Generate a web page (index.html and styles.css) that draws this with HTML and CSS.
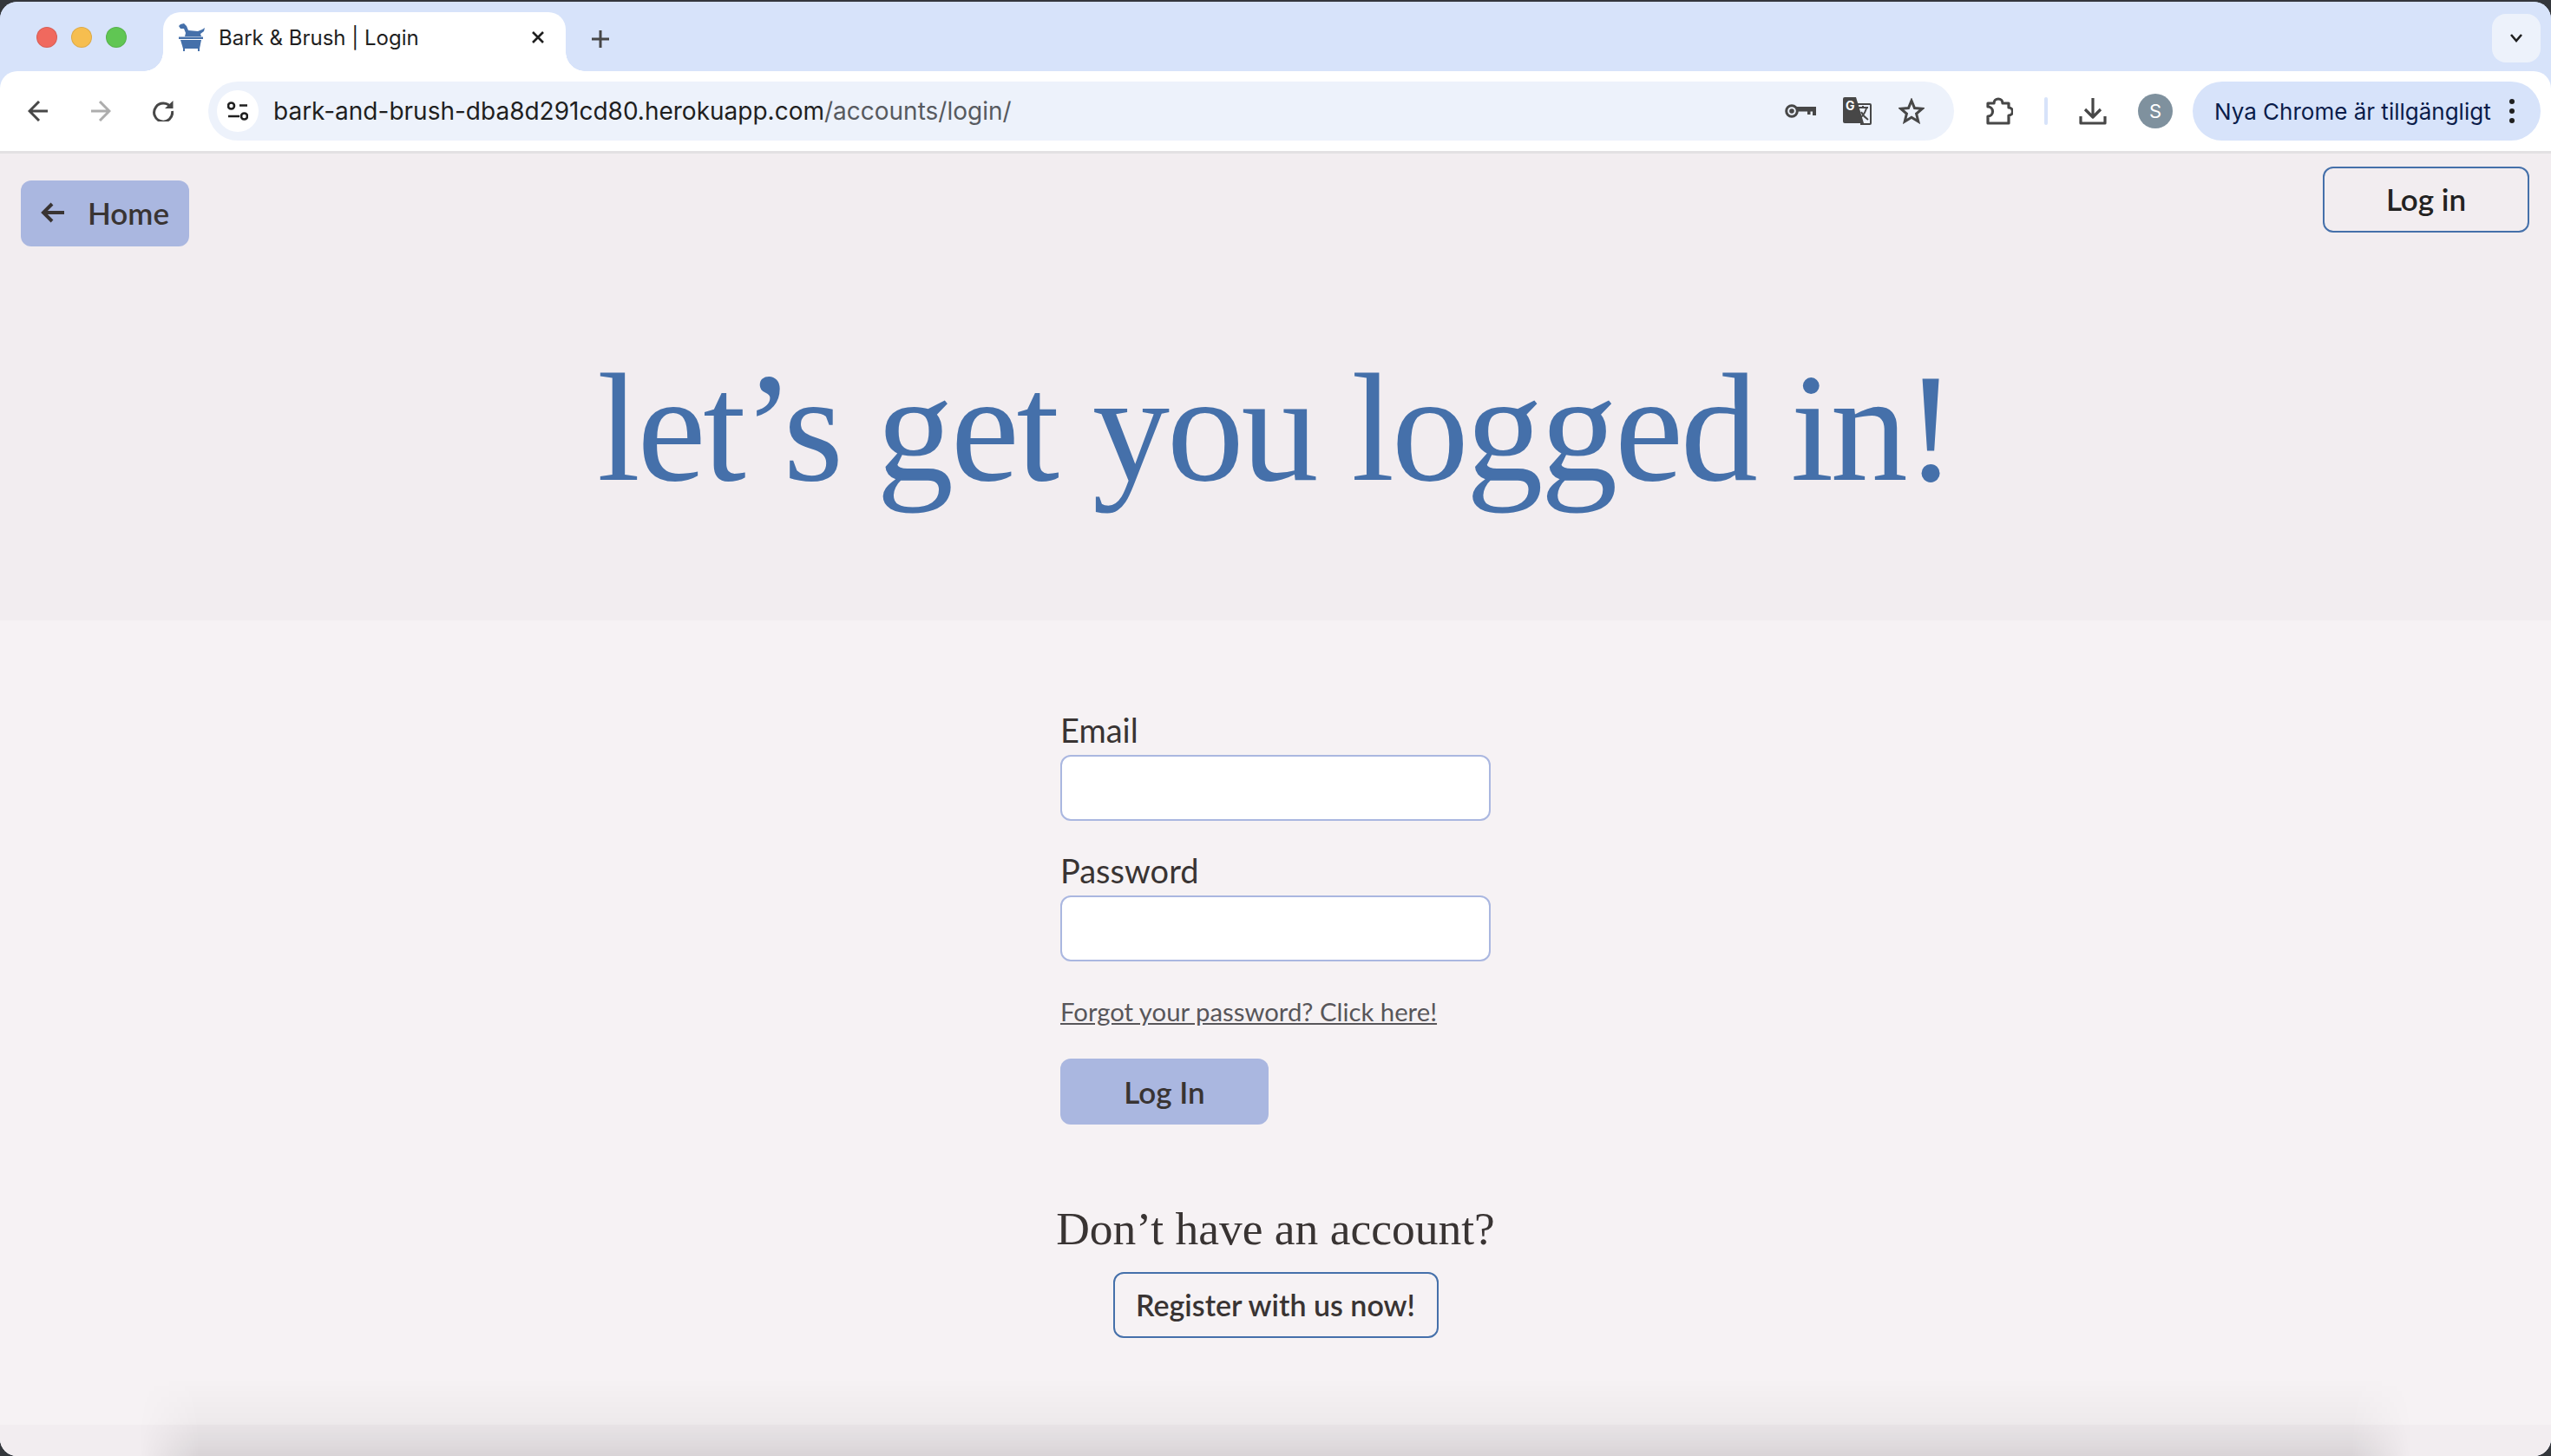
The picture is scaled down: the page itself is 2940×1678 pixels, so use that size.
FILE: index.html
```html
<!DOCTYPE html>
<html lang="en">
<head>
  <meta charset="UTF-8">
  <meta name="viewport" content="width=device-width, initial-scale=1.0">
  <title>Bark &amp; Brush | Login</title>
  <link rel="stylesheet" href="styles.css">
</head>
<body>
  <div class="window">

    <!-- Tab strip -->
    <div class="tabstrip">
      <div class="traffic">
        <span class="dot dot-red"></span>
        <span class="dot dot-yellow"></span>
        <span class="dot dot-green"></span>
      </div>
      <div class="tab">
        <svg class="favicon" viewBox="0 0 32 32">
          <path d="M4 1L8 0L11 3L13 8L24 9L29 7L32 5L31 9L27 12L28 15H9L10 11L8 6H4L2 3Z"/>
          <rect x="2" y="15.500" width="28" height="2.500"/>
          <path d="M4 19H28L26 29H7Z"/>
          <rect x="7" y="29" width="2" height="3"/>
          <rect x="24" y="29" width="2" height="3"/>
        </svg>
        <span class="tab-title">Bark &amp; Brush | Login</span>
        <svg class="tab-close" viewBox="0 0 16 16"><path d="M2 2L14 14M14 2L2 14"/></svg>
      </div>
      <svg class="new-tab" viewBox="0 0 24 24"><path d="M12 2V22M2 12H22"/></svg>
      <div class="tab-search">
        <svg viewBox="0 0 16 10"><path d="M2 1L8 8L14 1"/></svg>
      </div>
    </div>

    <!-- Toolbar -->
    <div class="toolbar">
      <svg class="tool-icon" viewBox="0 0 24 24"><path d="M23 12H3M13 1L2 12L13 23"/></svg>
      <svg class="tool-icon tool-off" viewBox="0 0 24 24"><path d="M1 12H21M11 1L22 12L11 23"/></svg>
      <svg class="tool-icon" viewBox="0 0 24 24"><path d="M21 8A10.500 10.500 0 1 0 22.500 12"/><path class="solid" d="M14 9H23.500V0Z"/></svg>

      <div class="omnibox">
        <span class="site-info">
          <svg viewBox="0 0 24 24">
            <circle cx="4.500" cy="6" r="3.500"/>
            <path d="M14 5.500H23M1 18H14"/>
            <circle cx="19.500" cy="18" r="3.500"/>
          </svg>
        </span>
        <span class="url"><span class="url-host">bark-and-brush-dba8d291cd80.herokuapp.com</span>/accounts/login/</span>
        <div class="omni-actions">
          <svg class="key-icon" viewBox="0 0 36 16">
            <circle cx="8" cy="8" r="6.300"/>
            <circle class="solid" cx="8" cy="8" r="2.800"/>
            <path class="solid" d="M14 3H36V13H32V8.500H29.500V12H26V8.500H14Z"/>
          </svg>
          <svg class="translate-icon" viewBox="0 0 33 32">
            <path class="solid" d="M2 0H15L24 30H2A2 2 0 0 1 0 28V2A2 2 0 0 1 2 0Z"/>
            <path class="outline" d="M17 8H31A1 1 0 0 1 32 9V30A1 1 0 0 1 31 31H20"/>
            <path class="outline" d="M18 12H29M23 10V13M27 13C25 19 22 23 18 25M21 17C23 21 26 24 29 26"/>
            <text class="translate-g" x="3" y="15">G</text>
          </svg>
          <svg class="star-icon" viewBox="0 0 30 30"><path d="M15 3L18.500 11.500L27.500 12.200L20.600 18L22.800 27L15 22.200L7.200 27L9.400 18L2.500 12.200L11.500 11.500Z"/></svg>
        </div>
      </div>

      <svg class="action-icon" viewBox="0 0 32 32"><path d="M3 7H10A5 5 0 0 1 20 7H27V12A4.500 4.500 0 0 1 27 21V30H3V22A5.500 5.500 0 0 0 3 11Z"/></svg>
      <span class="divider"></span>
      <svg class="action-icon" viewBox="0 0 32 32"><path d="M16 1V22M7 14L16 23L25 14M2 22V30H30V22"/></svg>
      <span class="avatar">S</span>
      <div class="update-pill">
        <span>Nya Chrome är tillgängligt</span>
        <svg class="menu-dots" viewBox="0 0 8 30"><circle cx="4" cy="4" r="3"/><circle cx="4" cy="15" r="3"/><circle cx="4" cy="26" r="3"/></svg>
      </div>
    </div>

    <!-- Page -->
    <div class="page">
      <header class="hero">
        <nav class="hero-nav">
          <a class="btn btn-home" href="#">
            <svg viewBox="0 0 28 24"><path d="M27 12H3M13 2L3 12L13 22"/></svg>
            Home
          </a>
          <a class="btn btn-login" href="#">Log in</a>
        </nav>
        <h1>let’s get you logged in!</h1>
      </header>

      <main class="content">
        <form class="login-form">
          <label for="email">Email</label>
          <input id="email" type="email">

          <label for="password">Password</label>
          <input id="password" type="password">

          <a class="forgot" href="#">Forgot your password? Click here!</a>
          <button class="btn btn-submit" type="button">Log In</button>
        </form>

        <h2>Don’t have an account?</h2>
        <a class="btn btn-register" href="#">Register with us now!</a>
      </main>

      <footer class="footer"></footer>
      <div class="bottom-shade"></div>
    </div>
  </div>
</body>
</html>
```

FILE: styles.css
```css
/* Browser frame */
* {
  box-sizing: border-box;
}

body {
  margin: 0;
  height: 100vh;
  background-color: #34373c;
  font-family: "Lato", "Inter", sans-serif;
  color: #393433;
  overflow: hidden;
}

.window {
  height: calc(100vh - 2px);
  margin-top: 2px;
  border-radius: 20px;
  overflow: hidden;
  display: flex;
  flex-direction: column;
  background-color: #d7e3fa;
}

.tabstrip {
  height: 80px;
  padding: 12px 12px 0 42px;
  display: flex;
  align-items: flex-start;
  background-color: #d7e3fa;
}

.traffic {
  display: flex;
  gap: 16px;
  margin-top: 17px;
}

.dot {
  width: 24px;
  height: 24px;
  border-radius: 50%;
  border: 1px solid rgba(0, 0, 0, 0.1);
}

.dot-red { background-color: #f0695e; }
.dot-yellow { background-color: #f6be4f; }
.dot-green { background-color: #60c653; }

.tab {
  position: relative;
  z-index: 1;
  width: 464px;
  height: 68px;
  margin-left: 42px;
  padding: 0 24px 10px 16px;
  display: flex;
  align-items: center;
  background: #fff;
  border-radius: 20px 20px 0 0;
}

.tab::before,
.tab::after {
  content: "";
  position: absolute;
  bottom: 0;
  width: 22px;
  height: 22px;
}

.tab::before {
  left: -22px;
  background: radial-gradient(circle at 0 0, transparent 21.500px, #fff 22px);
}

.tab::after {
  right: -22px;
  background: radial-gradient(circle at 100% 0, transparent 21.500px, #fff 22px);
}

.favicon {
  width: 32px;
  height: 32px;
  fill: #4570aa;
  flex-shrink: 0;
}

.tab-title {
  margin-left: 16px;
  font-family: "Inter", sans-serif;
  font-size: 24px;
  color: #1f1f1f;
  white-space: nowrap;
}

.tab-close {
  width: 16px;
  height: 16px;
  margin-left: auto;
  fill: none;
  stroke: #1f1f1f;
  stroke-width: 2.600;
}

.new-tab {
  width: 24px;
  height: 24px;
  margin: 19px 0 0 28px;
  fill: none;
  stroke: #474747;
  stroke-width: 3;
}

.tab-search {
  width: 56px;
  height: 56px;
  margin: 2px 0 0 auto;
  display: flex;
  align-items: center;
  justify-content: center;
  background-color: #edf2fb;
  border-radius: 16px;
}

.tab-search svg {
  width: 16px;
  height: 10px;
  fill: none;
  stroke: #1f1f1f;
  stroke-width: 2.600;
}

/* Toolbar */
.toolbar {
  height: 95px;
  padding: 12px 12px 12px 32px;
  display: flex;
  align-items: center;
  gap: 36px;
  background: #fff;
  border-bottom: 3px solid #e3e1e3;
  border-radius: 20px 20px 0 0;
}

.tool-icon {
  width: 24px;
  height: 24px;
  margin-right: 12px;
  fill: none;
  stroke: #474747;
  stroke-width: 3;
}

.tool-icon .solid {
  fill: #474747;
  stroke: none;
}

.tool-off {
  stroke: #adadad;
}

.omnibox {
  flex: 1;
  height: 68px;
  margin-left: -8px;
  padding: 0 34px 0 10px;
  display: flex;
  align-items: center;
  background-color: #edf2fb;
  border-radius: 34px;
}

.site-info {
  width: 48px;
  height: 48px;
  display: flex;
  align-items: center;
  justify-content: center;
  background: #fff;
  border-radius: 50%;
}

.site-info svg {
  width: 24px;
  height: 24px;
  fill: none;
  stroke: #1f1f1f;
  stroke-width: 2.600;
}

.url {
  margin-left: 17px;
  font-family: "Inter", sans-serif;
  font-size: 28px;
  color: #575a5f;
  white-space: nowrap;
}

.url-host {
  color: #1f1f1f;
}

.omni-actions {
  margin-left: auto;
  display: flex;
  align-items: center;
  gap: 31px;
  fill: none;
  stroke: #474747;
  stroke-width: 3;
}

.key-icon {
  width: 36px;
  height: 16px;
}

.key-icon .solid,
.translate-icon .solid {
  fill: #474747;
  stroke: none;
}

.translate-icon {
  width: 33px;
  height: 32px;
}

.translate-icon .outline {
  stroke-width: 2;
}

.translate-g {
  font-family: "Inter", sans-serif;
  font-size: 14px;
  font-weight: 700;
  fill: #fff;
  stroke: none;
}

.star-icon {
  width: 30px;
  height: 30px;
}

.action-icon {
  width: 32px;
  height: 32px;
  fill: none;
  stroke: #474747;
  stroke-width: 3.200;
  stroke-linejoin: round;
}

.divider {
  width: 4px;
  height: 32px;
  background-color: #d7e3fa;
  border-radius: 2px;
}

.avatar {
  width: 40px;
  height: 40px;
  display: flex;
  align-items: center;
  justify-content: center;
  background-color: #7f919e;
  border-radius: 50%;
  font-family: "Inter", sans-serif;
  font-size: 22px;
  color: #fff;
}

.update-pill {
  width: 401px;
  height: 68px;
  margin-left: -13px;
  padding: 0 29px 0 25px;
  display: flex;
  align-items: center;
  justify-content: space-between;
  background-color: #d7e3fa;
  border-radius: 34px;
  font-family: "Inter", sans-serif;
  font-size: 26px;
  color: #0a1c4a;
  white-space: nowrap;
}

.menu-dots {
  width: 8px;
  height: 30px;
  fill: #1f1f1f;
}

/* Page */
.page {
  position: relative;
  flex: 1;
  display: flex;
  flex-direction: column;
  background-color: #f6f2f4;
}

.hero {
  height: 538px;
  background-color: #f2edf0;
}

.hero-nav {
  display: flex;
  justify-content: space-between;
  align-items: flex-start;
  padding: 15px 25px 0 24px;
}

.btn {
  display: flex;
  align-items: center;
  justify-content: center;
  height: 76px;
  padding-bottom: 2px;
  border-radius: 12px;
  font-family: "Lato", sans-serif;
  font-size: 35px;
  font-weight: 600;
  color: #393433;
  text-decoration: none;
}

.btn-home {
  width: 194px;
  margin-top: 16px;
  gap: 26px;
  background-color: #aab7e0;
}

.btn-home svg {
  width: 28px;
  height: 24px;
  fill: none;
  stroke: #393433;
  stroke-width: 4;
}

.btn-login {
  width: 238px;
  border: 2px solid #4570aa;
  color: #222;
}

.hero h1 {
  margin: 109px 0 0;
  font-family: "Liberation Serif", serif;
  font-size: 178px;
  font-weight: 400;
  line-height: 200px;
  letter-spacing: -3.250px;
  text-align: center;
  color: #4570aa;
}

.content {
  flex: 1;
  padding-top: 101px;
  display: flex;
  flex-direction: column;
  align-items: center;
}

.login-form {
  width: 496px;
  display: flex;
  flex-direction: column;
  align-items: flex-start;
}

.login-form label {
  font-size: 38px;
  line-height: 50px;
  margin-bottom: 4px;
}

.login-form input {
  width: 100%;
  height: 76px;
  margin-bottom: 32px;
  background: #fff;
  border: 2px solid #aab7e0;
  border-radius: 12px;
}

.forgot {
  margin-top: 6px;
  font-size: 29.300px;
  line-height: 40px;
  color: #58565a;
}

.btn-submit {
  width: 240px;
  margin-top: 34px;
  background-color: #aab7e0;
  border: none;
}

.content h2 {
  margin: 90px 0 0;
  font-family: "Liberation Serif", serif;
  font-size: 53.500px;
  font-weight: 400;
  line-height: 60px;
  white-space: nowrap;
}

.btn-register {
  width: 375px;
  margin-top: 20px;
  border: 2px solid #4570aa;
  font-size: 34px;
}

.footer {
  height: 36px;
  background-color: #f2edf0;
}

.bottom-shade {
  position: absolute;
  left: 160px;
  right: 160px;
  bottom: 0;
  height: 90px;
  pointer-events: none;
  background: linear-gradient(to bottom, rgba(0, 0, 0, 0), rgba(0, 0, 0, 0.03) 55%, rgba(0, 0, 0, 0.1));
  -webkit-mask-image: linear-gradient(to right, transparent, #000 70px, #000 calc(100% - 70px), transparent);
  mask-image: linear-gradient(to right, transparent, #000 70px, #000 calc(100% - 70px), transparent);
}
```
